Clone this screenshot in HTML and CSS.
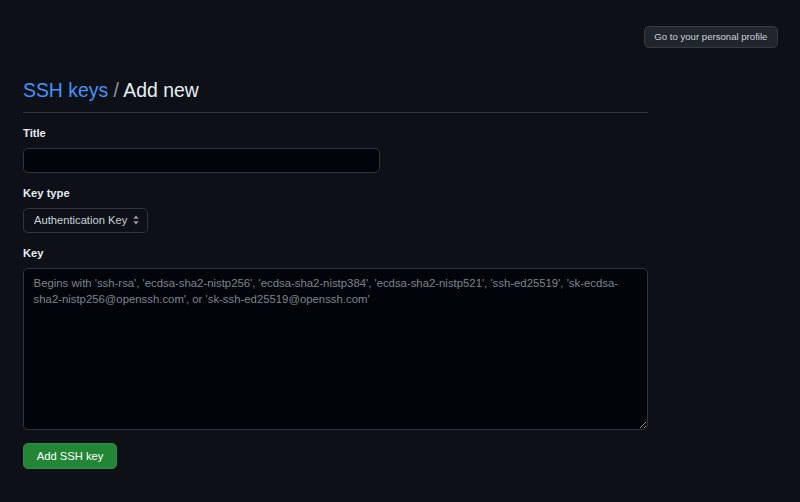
FILE: index.html
```html
<!DOCTYPE html>
<html lang="en">
<head>
<meta charset="utf-8">
<title>Add new SSH key</title>
<link rel="stylesheet" href="styles.css">
</head>
<body>
<div class="topbar">
  <a class="btn-sm" href="#">Go to your personal profile</a>
</div>
<main class="main">
  <div class="subhead">
    <h1 class="subhead-heading"><a class="crumb" href="#">SSH keys</a> <span class="sep">/</span> Add new</h1>
  </div>
  <form class="form">
    <div class="form-group">
      <label class="label" for="title">Title</label>
      <input class="input input-title" id="title" type="text">
    </div>
    <div class="form-group">
      <label class="label">Key type</label>
      <div class="select">
        <span class="select-text">Authentication Key</span>
        <svg class="select-arrows" width="6" height="10" viewBox="0 0 6 10"><path d="M3 0.5 L5.8 3.8 H0.2 Z M3 9.5 L5.8 6.2 H0.2 Z" fill="#8d96a0"/></svg>
      </div>
    </div>
    <div class="form-group">
      <label class="label" for="key">Key</label>
      <textarea class="input textarea" id="key" placeholder="Begins with 'ssh-rsa', 'ecdsa-sha2-nistp256', 'ecdsa-sha2-nistp384', 'ecdsa-sha2-nistp521', 'ssh-ed25519', 'sk-ecdsa-sha2-nistp256@openssh.com', or 'sk-ssh-ed25519@openssh.com'"></textarea>
    </div>
    <button class="btn-primary" type="button">Add SSH key</button>
  </form>
</main>
</body>
</html>
```

FILE: styles.css
```css
* { box-sizing: border-box; }

html, body {
  margin: 0;
  background: #0d1117;
}

body {
  font-family: "Liberation Sans", Arial, sans-serif;
  font-size: 11.2px;
  line-height: 1.5;
  color: #e6edf3;
  width: 800px;
  height: 502px;
  overflow: hidden;
}

.topbar {
  display: flex;
  justify-content: flex-end;
  padding: 26px 22px 0 0;
}

.btn-sm {
  display: flex;
  align-items: center;
  height: 22.4px;
  padding: 0 9.6px;
  font-size: 9.6px;
  color: #c9d1d9;
  text-decoration: none;
  background: #21262d;
  border: 1px solid #363b42;
  border-radius: 4.8px;
}

.main {
  width: 648px;
  padding-left: 23px;
}

.subhead {
  margin-top: 30px;
  padding-bottom: 9.6px;
  border-bottom: 1px solid #30363d;
}

.subhead-heading {
  margin: 0;
  font-size: 19.4px;
  line-height: 24px;
  font-weight: 400;
  color: #e6edf3;
}

.crumb {
  color: #4493f8;
  text-decoration: none;
}

.sep {
  color: #9198a1;
}

.form-group {
  margin-top: 12.4px;
}

.label {
  display: block;
  font-weight: 700;
  line-height: 16.8px;
  margin-bottom: 5.8px;
  color: #e6edf3;
}

.input {
  display: block;
  font-family: inherit;
  font-size: 11.2px;
  color: #e6edf3;
  background: #010409;
  border: 1px solid #30363d;
  border-radius: 4.8px;
  outline: none;
}

.input-title {
  width: 357px;
  height: 25px;
  padding: 0 9.6px;
}

.select {
  display: flex;
  align-items: center;
  width: 125px;
  height: 25px;
  padding: 0 8px 0 10px;
  background: #0d1117;
  border: 1px solid #30363d;
  border-radius: 4.8px;
  color: #c9d1d9;
}

.select-text {
  flex: 1;
  white-space: nowrap;
}

.select-arrows {
  display: block;
  flex: none;
}

.textarea {
  width: 625px;
  height: 162.4px;
  padding: 5.6px 9.6px;
  font-size: 11.35px;
  line-height: 16.8px;
  resize: vertical;
}

.textarea::placeholder {
  color: #7d8590;
}

.btn-primary {
  display: block;
  margin-top: 12.6px;
  height: 25.6px;
  padding: 0 12.8px;
  font-family: inherit;
  font-size: 11.2px;
  color: #ffffff;
  background: #238636;
  border: 1px solid #2b9140;
  border-radius: 4.8px;
}
```
